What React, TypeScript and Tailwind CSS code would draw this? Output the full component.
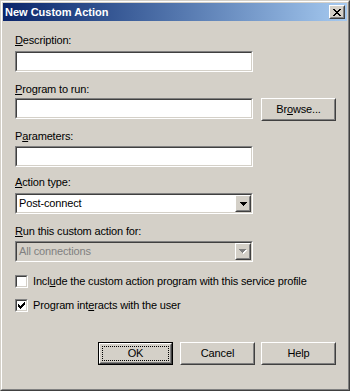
import React from "react";

const FONT = "font-['Liberation_Sans',Arial,sans-serif] text-[11px] leading-[13px] tracking-[-0.15px] text-black";

function Sunken({ className = "", inner = "bg-white", children }: { className?: string; inner?: string; children?: React.ReactNode }) {
  return (
    <div className={"border border-t-[#808080] border-l-[#808080] border-b-white border-r-white " + className}>
      <div className={"h-full border border-t-[#404040] border-l-[#404040] border-b-[#d4d0c8] border-r-[#d4d0c8] " + inner}>
        {children}
      </div>
    </div>
  );
}

function Raised({ className = "", children }: { className?: string; children?: React.ReactNode }) {
  return (
    <div className={"border border-t-white border-l-white border-b-[#404040] border-r-[#404040] bg-[#d4d0c8] " + className}>
      <div className="flex h-full items-center justify-center border border-t-[#d4d0c8] border-l-[#d4d0c8] border-b-[#808080] border-r-[#808080]">
        {children}
      </div>
    </div>
  );
}

function Pixels({ rows, color, w, h }: { rows: string[]; color: string; w: number; h: number }) {
  const rects: React.ReactNode[] = [];
  rows.forEach((r, y) =>
    r.split("").forEach((c, x) => {
      if (c === "X") rects.push(<rect key={x + "-" + y} x={x} y={y} width={1} height={1} fill={color} />);
    })
  );
  return (
    <svg width={w} height={h} viewBox={`0 0 ${w} ${h}`} shapeRendering="crispEdges">
      {rects}
    </svg>
  );
}

const CHECK = ["......X", ".....XX", "X...XXX", "XX.XXX.", "XXXXX..", ".XXX...", "..X...."];
const CLOSE = ["XX....XX", ".XX..XX.", "..XXXX..", "...XX...", "..XXXX..", ".XX..XX.", "XX....XX"];
const ARROW = ["XXXXXXX", ".XXXXX.", "..XXX..", "...X..."];

function Label({ children, className = "" }: { children: React.ReactNode; className?: string }) {
  return <div className={"h-[13px] " + className}>{children}</div>;
}

function Combo({ value, disabled }: { value: string; disabled?: boolean }) {
  return (
    <Sunken className="h-[21px] w-[238px]" inner={disabled ? "bg-[#d4d0c8]" : "bg-white"}>
      <div className="flex h-full items-center">
        <span className={"flex-1 pl-[2px] " + (disabled ? "text-[#808080]" : "")}>{value}</span>
        <Raised className="h-[17px] w-[16px]">
          {disabled ? (
            <div className="relative h-[5px] w-[8px]">
              <div className="absolute left-[1px] top-[1px]">
                <Pixels rows={ARROW} color="#ffffff" w={7} h={4} />
              </div>
              <div className="absolute left-0 top-0">
                <Pixels rows={ARROW} color="#808080" w={7} h={4} />
              </div>
            </div>
          ) : (
            <Pixels rows={ARROW} color="#000000" w={7} h={4} />
          )}
        </Raised>
      </div>
    </Sunken>
  );
}

function Check({ checked, children }: { checked?: boolean; children: React.ReactNode }) {
  return (
    <div className="flex h-[13px] items-center">
      <Sunken className="h-[13px] w-[13px]">
        <div className="flex h-full items-center justify-center">
          {checked && <Pixels rows={CHECK} color="#000000" w={7} h={7} />}
        </div>
      </Sunken>
      <span className="ml-[5px]">{children}</span>
    </div>
  );
}

export default function App() {
  return (
    <div className={"h-[391px] w-[350px] border border-t-[#d4d0c8] border-l-[#d4d0c8] border-b-[#404040] border-r-[#404040] " + FONT}>
      <div className="flex h-full flex-col border border-t-white border-l-white border-b-[#808080] border-r-[#808080] bg-[#d4d0c8] p-[1px]">
        {/* title bar */}
        <div className="flex h-[18px] items-center bg-gradient-to-r from-[#0a246a] to-[#a6caf0] pl-[2px] pr-[2px]">
          <span className="flex-1 text-[11px] font-bold tracking-normal text-white">New Custom Action</span>
          <Raised className="h-[14px] w-[16px]">
            <Pixels rows={CLOSE} color="#000000" w={8} h={7} />
          </Raised>
        </div>

        {/* body */}
        <div className="flex flex-1 flex-col pl-[12px]">
          <Label className="mt-[13px]">
            <u>D</u>escription:
          </Label>
          <Sunken className="mt-[4px] h-[21px] w-[238px]" />

          <Label className="mt-[11px]">
            <u>P</u>rogram to run:
          </Label>
          <div className="mt-[2px] flex items-start gap-[8px]">
            <Sunken className="h-[21px] w-[238px]" />
            <Raised className="h-[23px] w-[75px]">
              <span>
                Br<u>o</u>wse...
              </span>
            </Raised>
          </div>

          <Label className="mt-[9px]">
            P<u>a</u>rameters:
          </Label>
          <Sunken className="mt-[3px] h-[21px] w-[238px]" />

          <Label className="mt-[9px]">
            <u>A</u>ction type:
          </Label>
          <div className="mt-[4px]">
            <Combo value="Post-connect" />
          </div>

          <Label className="mt-[11px]">
            <u>R</u>un this custom action for:
          </Label>
          <div className="mt-[3px]">
            <Combo value="All connections" disabled />
          </div>

          <div className="mt-[13px]">
            <Check>
              Incl<u>u</u>de the custom action program with this service profile
            </Check>
          </div>
          <div className="mt-[11px]">
            <Check checked>
              Program int<u>e</u>racts with the user
            </Check>
          </div>

          {/* buttons */}
          <div className="mt-[30px] flex pl-[83px]">
            <div className="h-[23px] w-[75px] border border-black">
              <Raised className="h-full w-full">
                <div className="flex h-[15px] w-[67px] items-center justify-center border border-dotted border-black">
                  OK
                </div>
              </Raised>
            </div>
            <Raised className="ml-[7px] h-[23px] w-[75px]">Cancel</Raised>
            <Raised className="ml-[6px] h-[23px] w-[75px]">Help</Raised>
          </div>
        </div>
      </div>
    </div>
  );
}
